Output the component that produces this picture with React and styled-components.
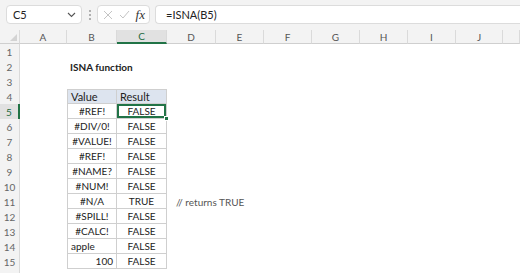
import styled, { createGlobalStyle } from "styled-components";

const GlobalStyle = createGlobalStyle`
  html, body {
    margin: 0;
    padding: 0;
    background: #ffffff;
  }
  body {
    font-family: Lato, "Open Sans", "Liberation Sans", sans-serif;
    overflow: hidden;
  }
`;

// Barra de fórmulas
const FormulaBar = styled.div`
  height: 30px;
  box-sizing: border-box;
  background: #f3f3f3;
  display: flex;
  align-items: flex-start;
  padding: 5px 0 0 6px;
`;

const NameBox = styled.div`
  width: 76px;
  height: 19px;
  box-sizing: border-box;
  background: #fff;
  border: 1px solid #dcdcdc;
  border-radius: 4px;
  display: flex;
  align-items: center;
  justify-content: space-between;
  padding: 0 5px 0 6px;
  font-size: 11px;
  color: #222;
`;

const Dots = styled.div`
  width: 15px;
  height: 19px;
  display: flex;
  flex-direction: column;
  align-items: center;
  justify-content: center;
  gap: 2px;
  & span {
    width: 2px;
    height: 2px;
    background: #9a9a9a;
    border-radius: 1px;
  }
`;

const FxBox = styled.div`
  width: 53px;
  height: 19px;
  box-sizing: border-box;
  background: #fff;
  border: 1px solid #dcdcdc;
  border-radius: 4px;
  display: flex;
  align-items: center;
  justify-content: space-between;
  padding: 0 4px 0 5px;
`;

const Fx = styled.span`
  font-family: "Liberation Serif", "DejaVu Serif", serif;
  font-style: italic;
  font-size: 13px;
  color: #333;
`;

const FormulaInput = styled.div`
  flex: 1;
  height: 19px;
  box-sizing: border-box;
  margin-left: 5px;
  background: #fff;
  border: 1px solid #dcdcdc;
  border-right: none;
  border-radius: 4px 0 0 4px;
  display: flex;
  align-items: center;
  padding-left: 10px;
  font-size: 11px;
  color: #222;
`;

// Hoja de cálculo
const Sheet = styled.div`
  display: grid;
  grid-template-columns: 20px 47px 50px 50px 49px 48px 48px 48px 48px 48px 47px 1fr;
  grid-template-rows: 14px;
  grid-auto-rows: 15px;
  font-size: 10px;
  color: #222;
`;

const Corner = styled.div`
  background: #f3f3f3;
  border-bottom: 1px solid #cfcfcf;
  border-right: 1px solid #dadada;
  box-sizing: border-box;
  position: relative;
  &::after {
    content: "";
    position: absolute;
    right: 2px;
    bottom: 2px;
    border-style: solid;
    border-width: 0 0 7px 7px;
    border-color: transparent transparent #d3d3d3 transparent;
  }
`;

const ColHead = styled.div`
  box-sizing: border-box;
  background: ${(p) => (p.$selected ? "#e1e1e1" : "#f3f3f3")};
  border-bottom: ${(p) => (p.$selected ? "2px solid #217346" : "1px solid #cfcfcf")};
  border-right: 1px solid #dadada;
  display: flex;
  align-items: center;
  justify-content: center;
  font-size: 10px;
  color: ${(p) => (p.$selected ? "#1e6b41" : "#555")};
`;

const RowHead = styled.div`
  box-sizing: border-box;
  background: ${(p) => (p.$selected ? "#e1e1e1" : "#f3f3f3")};
  border-right: ${(p) => (p.$selected ? "2px solid #217346" : "1px solid #dadada")};
  display: flex;
  align-items: center;
  justify-content: center;
  font-size: 10px;
  color: ${(p) => (p.$selected ? "#1e6b41" : "#666")};
`;

const Cell = styled.div`
  box-sizing: border-box;
  position: relative;
  display: flex;
  align-items: center;
  justify-content: ${(p) =>
    p.$align === "left" ? "flex-start" : p.$align === "right" ? "flex-end" : "center"};
  padding: ${(p) => (p.$note ? "0 3px 0 9px" : "0 3px")};
  white-space: nowrap;
  overflow: visible;
  background: ${(p) => (p.$head ? "#dde4ef" : p.$table ? "#fff" : "transparent")};
  border-right: ${(p) => (p.$table ? "1px solid #cfcfcf" : "none")};
  border-bottom: ${(p) => (p.$table ? "1px solid #cfcfcf" : "none")};
  border-left: ${(p) => (p.$first ? "1px solid #cfcfcf" : "none")};
  border-top: ${(p) => (p.$top ? "1px solid #cfcfcf" : "none")};
  font-weight: ${(p) => (p.$bold ? 700 : 400)};
  font-size: ${(p) => (p.$head ? "11px" : "10px")};
  color: ${(p) => (p.$note ? "#555" : "#222")};
  box-shadow: ${(p) => (p.$active ? "inset 0 0 0 2px #217346" : "none")};
  z-index: ${(p) => (p.$active ? 1 : 0)};
`;

const Handle = styled.span`
  position: absolute;
  right: -3px;
  bottom: -3px;
  width: 5px;
  height: 5px;
  background: #217346;
  border: 1px solid #fff;
  box-sizing: border-box;
  z-index: 2;
`;

const columns = ["A", "B", "C", "D", "E", "F", "G", "H", "I", "J", ""];

const rows = [
  ["#REF!", "FALSE"],
  ["#DIV/0!", "FALSE"],
  ["#VALUE!", "FALSE"],
  ["#REF!", "FALSE"],
  ["#NAME?", "FALSE"],
  ["#NUM!", "FALSE"],
  ["#N/A", "TRUE"],
  ["#SPILL!", "FALSE"],
  ["#CALC!", "FALSE"],
  ["apple", "FALSE", "left"],
  ["100", "FALSE", "right"],
];

const Chevron = () => (
  <svg width="9" height="6" viewBox="0 0 9 6">
    <path d="M1 1l3.5 3.5L8 1" fill="none" stroke="#555" strokeWidth="1.1" />
  </svg>
);

const CrossIcon = () => (
  <svg width="10" height="10" viewBox="0 0 10 10">
    <path d="M1 1l8 8M9 1l-8 8" stroke="#c4c4c4" strokeWidth="1" />
  </svg>
);

const CheckIcon = () => (
  <svg width="11" height="9" viewBox="0 0 11 9">
    <path d="M1 5l3 3 6-7" fill="none" stroke="#c4c4c4" strokeWidth="1" />
  </svg>
);

const renderCell = (r, c) => {
  // columna B = 1, columna C = 2
  if (r === 2 && c === 1) {
    return <Cell key={c} $bold $align="left">ISNA function</Cell>;
  }
  if (r === 4 && (c === 1 || c === 2)) {
    return (
      <Cell key={c} $table $head $top $first={c === 1} $align="left">
        {c === 1 ? "Value" : "Result"}
      </Cell>
    );
  }
  if (r >= 5 && r <= 15 && (c === 1 || c === 2)) {
    const row = rows[r - 5];
    const active = r === 5 && c === 2;
    return (
      <Cell key={c} $table $first={c === 1} $active={active} $align={c === 1 ? row[2] : "center"}>
        {c === 1 ? row[0] : row[1]}
        {active && <Handle />}
      </Cell>
    );
  }
  if (r === 11 && c === 3) {
    return <Cell key={c} $note $align="left">// returns TRUE</Cell>;
  }
  return <Cell key={c} />;
};

const App = () => {
  const rowNumbers = Array.from({ length: 16 }, (_, i) => i + 1);

  return (
    <>
      <GlobalStyle />
      <FormulaBar>
        <NameBox>
          C5
          <Chevron />
        </NameBox>
        <Dots>
          <span />
          <span />
          <span />
        </Dots>
        <FxBox>
          <CrossIcon />
          <CheckIcon />
          <Fx>fx</Fx>
        </FxBox>
        <FormulaInput>=ISNA(B5)</FormulaInput>
      </FormulaBar>

      <Sheet>
        <Corner />
        {columns.map((col, i) => (
          <ColHead key={i} $selected={col === "C"}>
            {col}
          </ColHead>
        ))}
        {rowNumbers.map((r) => [
          <RowHead key={`h${r}`} $selected={r === 5}>
            {r}
          </RowHead>,
          ...columns.map((_, c) => renderCell(r, c)),
        ])}
      </Sheet>
    </>
  );
};

export default App;
